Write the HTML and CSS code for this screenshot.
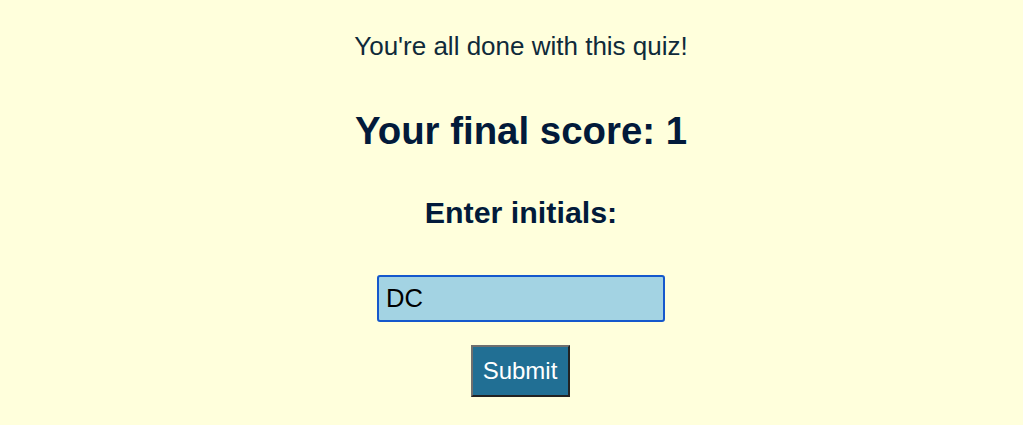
FILE: index.html
```html
<!DOCTYPE html>
<html>
<head>
<meta charset="utf-8">
<link rel="stylesheet" href="styles.css">
</head>
<body>
<main class="done">
  <p class="intro">You're all done with this quiz!</p>
  <h1 class="score">Your final score: 1</h1>
  <h2 class="label">Enter initials:</h2>
  <input class="initials" type="text" value="DC">
  <button class="submit">Submit</button>
</main>
</body>
</html>
```

FILE: styles.css
```css
html, body {
  margin: 0;
  padding: 0;
}
body {
  background: #ffffdc;
  font-family: "Liberation Sans", Arial, sans-serif;
  color: #0d1f3c;
  height: 425px;
  overflow: hidden;
}
.done {
  display: flex;
  flex-direction: column;
  align-items: center;
  padding-top: 29px;
  padding-left: 19px;
}
.intro {
  margin: 0;
  font-size: 26px;
  line-height: 34px;
  color: #0f2a3a;
}
.score {
  margin: 45px 0 0;
  font-size: 38.4px;
  line-height: 46px;
  font-weight: bold;
  color: #021a3a;
}
.label {
  margin: 40px 0 0;
  font-size: 30.4px;
  line-height: 36px;
  font-weight: bold;
  color: #021a3a;
}
.initials {
  margin-top: 45px;
  box-sizing: border-box;
  width: 288px;
  height: 47px;
  border: 2px solid #1558cc;
  border-radius: 3px;
  background: #a3d3e3;
  font-family: "Liberation Sans", Arial, sans-serif;
  font-size: 25.6px;
  color: #000;
  padding: 0 7px;
  outline: none;
}
.submit {
  margin: 23px 2px 0 0;
  box-sizing: border-box;
  width: 99px;
  height: 52px;
  background: #216f94;
  color: #fff;
  font-family: "Liberation Sans", Arial, sans-serif;
  font-size: 24px;
  border: 2px solid;
  border-color: #6f6f6f #222 #222 #6f6f6f;
  padding: 0;
}
```
